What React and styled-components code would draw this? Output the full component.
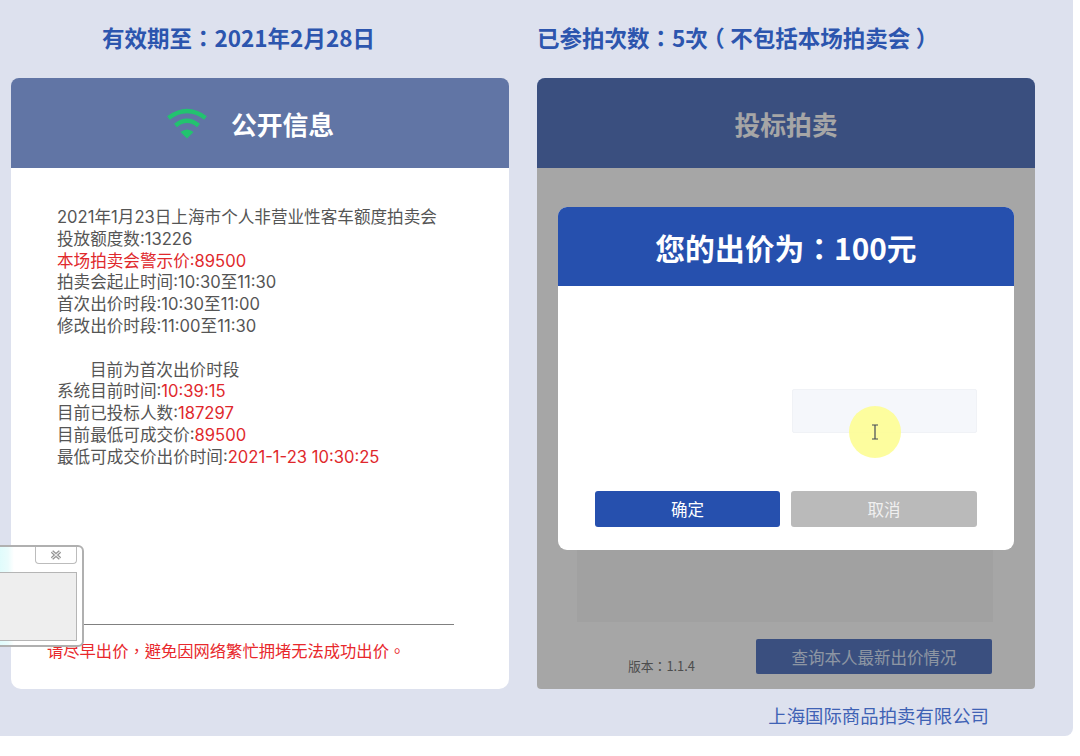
import styled, { createGlobalStyle } from "styled-components"

const GlobalStyle = createGlobalStyle`
    html, body {
        margin: 0;
        padding: 0;
        background: #ffffff;
    }
    * {
        box-sizing: border-box;
    }
`

const infoLines = [
    { text: "2021年1月23日上海市个人非营业性客车额度拍卖会" },
    { text: "投放额度数:13226" },
    { text: "本场拍卖会警示价:89500", alert: true },
    { text: "拍卖会起止时间:10:30至11:30" },
    { text: "首次出价时段:10:30至11:00" },
    { text: "修改出价时段:11:00至11:30" },
]

const statusLines = [
    { label: "系统目前时间:", value: "10:39:15" },
    { label: "目前已投标人数:", value: "187297" },
    { label: "目前最低可成交价:", value: "89500" },
    { label: "最低可成交价出价时间:", value: "2021-1-23 10:30:25" },
]

function WifiIcon() {
    return (
        <svg width="42" height="32" viewBox="0 0 42 32" fill="none">
            <path d="M2.5 11 Q21 -3 39.5 11" stroke="#22C36F" strokeWidth="4.5" />
            <path d="M9.5 18.5 Q21 9 32.5 18.5" stroke="#22C36F" strokeWidth="4.5" />
            <path d="M14.5 25 Q21 20 27.5 25 L21 31.5 Z" fill="#22C36F" />
        </svg>
    )
}

function TextCursor() {
    return (
        <svg width="10" height="16" viewBox="0 0 10 16" fill="none">
            <path d="M2 1 H8 M5 1 V15 M2 15 H8" stroke="#444a55" strokeWidth="1.2" />
        </svg>
    )
}

export default function App() {
    return (
        <Screen>
            <GlobalStyle />
            <Page>
                <Columns>
                    <Column>
                        <InfoTitle $indent="91px">有效期至：2021年2月28日</InfoTitle>
                        <Card>
                            <PublicHeader>
                                <WifiIcon />
                                <span>公开信息</span>
                            </PublicHeader>
                            <PublicBody>
                                <InfoBlock>
                                    {infoLines.map((line) => (
                                        <InfoLine key={line.text} $alert={line.alert}>{line.text}</InfoLine>
                                    ))}
                                    <StatusTitle>目前为首次出价时段</StatusTitle>
                                    {statusLines.map((line) => (
                                        <InfoLine key={line.label}>
                                            {line.label}<Red>{line.value}</Red>
                                        </InfoLine>
                                    ))}
                                </InfoBlock>
                                <Notice>请尽早出价，避免因网络繁忙拥堵无法成功出价。</Notice>
                            </PublicBody>
                        </Card>
                    </Column>

                    <Column>
                        <InfoTitle>
                            已参拍次数：5次<Paren>（</Paren>不包括本场拍卖会<Paren>）</Paren>
                        </InfoTitle>
                        <Card $bottomRadius="4px">
                            <BidHeader>投标拍卖</BidHeader>
                            <BidBody>
                                <BidPanel />
                                <BidFooter>
                                    <Version>版本：1.1.4</Version>
                                    <QueryButton>查询本人最新出价情况</QueryButton>
                                </BidFooter>
                            </BidBody>
                            <Overlay />
                            <Modal>
                                <ModalHeader>您的出价为：100元</ModalHeader>
                                <ModalBody>
                                    <PriceInput />
                                    <ModalButtons>
                                        <ModalButton $primary>确定</ModalButton>
                                        <ModalButton>取消</ModalButton>
                                    </ModalButtons>
                                </ModalBody>
                            </Modal>
                        </Card>
                        <Company>上海国际商品拍卖有限公司</Company>
                    </Column>
                </Columns>
            </Page>

            <Highlight>
                <TextCursor />
            </Highlight>

            <PopupWindow>
                <PopupClose>
                    <svg width="12" height="10" viewBox="0 0 12 10" fill="none">
                        <path d="M2 1.5 L10 8.5 M10 1.5 L2 8.5" stroke="#8b8b8b" strokeWidth="3.4" />
                        <path d="M2 1.5 L10 8.5 M10 1.5 L2 8.5" stroke="#e8e8e8" strokeWidth="1.1" />
                    </svg>
                </PopupClose>
                <PopupContent />
            </PopupWindow>
        </Screen>
    )
}

const Screen = styled.div`
    position: relative;
    width: 1080px;
    height: 756px;
    overflow: hidden;
    background: #ffffff;
    font-family: Inter, "Noto Sans CJK SC", sans-serif;
`
const Page = styled.div`
    width: 1073px;
    height: 736px;
    background: #dde1ee;
    border-bottom-right-radius: 8px;
    padding: 3px 0 0 11px;
`
const Columns = styled.div`
    display: grid;
    grid-template-columns: 498px 498px;
    column-gap: 28px;
`
const Column = styled.div`
    display: flex;
    flex-direction: column;
`
const InfoTitle = styled.div`
    height: 75px;
    padding: 18px 0 0 ${(props) => props.$indent || "0"};
    line-height: 32px;
    font-family: "Noto Sans CJK TC", sans-serif;
    font-size: 22.5px;
    font-weight: bold;
    color: #2c55ae;
    white-space: nowrap;
`
const Paren = styled.span`
    font-feature-settings: "halt";
    padding: 0 5.6px;
`
const Card = styled.div`
    position: relative;
    height: 611px;
    display: flex;
    flex-direction: column;
    border-radius: 8px 8px ${(props) => props.$bottomRadius || "0"} ${(props) => props.$bottomRadius || "0"};
    overflow: hidden;
`
const PublicHeader = styled.div`
    height: 90px;
    flex-shrink: 0;
    display: flex;
    align-items: center;
    justify-content: center;
    gap: 23px;
    padding-right: 20px;
    background: #6175a5;
    color: #ffffff;
    font-family: "Noto Sans CJK SC", sans-serif;
    font-size: 25.8px;
    font-weight: bold;
`
const PublicBody = styled.div`
    flex: 1;
    display: flex;
    flex-direction: column;
    justify-content: space-between;
    background: #ffffff;
    border-radius: 0 0 10px 10px;
`
const InfoBlock = styled.div`
    padding: 39px 0 0 46px;
    font-size: 16.6px;
    line-height: 21.8px;
    color: #555555;
`
const InfoLine = styled.div`
    color: ${(props) => (props.$alert ? "#e0282c" : "#555555")};
    white-space: nowrap;
`
const StatusTitle = styled.div`
    margin-top: 21.8px;
    padding-left: 33px;
`
const Red = styled.span`
    color: #e0282c;
`
const Notice = styled.div`
    margin: 0 55px 27px 36px;
    padding-top: 13px;
    border-top: 1px solid #808080;
    font-family: "Noto Sans CJK TC", sans-serif;
    font-size: 16.3px;
    line-height: 24px;
    color: #e8282c;
    white-space: nowrap;
`
const BidHeader = styled.div`
    height: 90px;
    flex-shrink: 0;
    display: flex;
    align-items: center;
    justify-content: center;
    background: #5a7ac4;
    color: #ffffff;
    font-family: "Noto Sans CJK SC", sans-serif;
    font-size: 25.8px;
    font-weight: bold;
`
const BidBody = styled.div`
    flex: 1;
    display: flex;
    flex-direction: column;
    background: #ffffff;
`
const BidPanel = styled.div`
    height: 394px;
    margin: 60px 42px 0 40px;
    background: #f7f7f8;
`
const BidFooter = styled.div`
    display: flex;
    align-items: flex-end;
    padding: 17px 43px 0 91px;
`
const Version = styled.div`
    flex: 1;
    font-family: "Noto Sans CJK TC", sans-serif;
    font-size: 12.8px;
    line-height: 16px;
    color: #777777;
`
const QueryButton = styled.div`
    width: 236px;
    height: 35px;
    display: flex;
    align-items: center;
    justify-content: center;
    border-radius: 2px;
    background: #5a7ac4;
    color: #dbe6fa;
    font-family: "Noto Sans CJK SC", sans-serif;
    font-size: 16.5px;
`
const Overlay = styled.div`
    position: absolute;
    inset: 0;
    background: rgba(0, 0, 0, 0.35);
`
const Modal = styled.div`
    position: absolute;
    left: 21px;
    top: 129px;
    width: 456px;
    height: 343px;
    display: flex;
    flex-direction: column;
    border-radius: 9px;
    overflow: hidden;
    background: #ffffff;
`
const ModalHeader = styled.div`
    height: 79px;
    display: flex;
    align-items: center;
    justify-content: center;
    background: #2650ae;
    color: #ffffff;
    font-family: "Noto Sans CJK TC", sans-serif;
    font-size: 29.8px;
    font-weight: bold;
`
const ModalBody = styled.div`
    flex: 1;
    display: flex;
    flex-direction: column;
    padding: 103px 37px 23px;
`
const PriceInput = styled.div`
    align-self: flex-end;
    width: 185px;
    height: 44px;
    background: #f5f7fb;
    border: 1px solid #f0f2f6;
    border-radius: 2px;
`
const ModalButtons = styled.div`
    margin-top: auto;
    display: grid;
    grid-template-columns: 185px 186px;
    column-gap: 11px;
`
const ModalButton = styled.div`
    height: 36px;
    display: flex;
    align-items: center;
    justify-content: center;
    border-radius: 3px;
    background: ${(props) => (props.$primary ? "#2650ae" : "#bababa")};
    color: ${(props) => (props.$primary ? "#ffffff" : "#f0f0f0")};
    font-family: "Noto Sans CJK SC", sans-serif;
    font-size: 16.5px;
`
const Company = styled.div`
    padding: 13px 46px 0 0;
    text-align: right;
    font-family: "Noto Sans CJK SC", sans-serif;
    font-size: 18.4px;
    line-height: 26px;
    color: #3f62b5;
    white-space: nowrap;
`
const Highlight = styled.div`
    position: absolute;
    left: 849px;
    top: 406px;
    width: 52px;
    height: 52px;
    display: flex;
    align-items: center;
    justify-content: center;
    border-radius: 50%;
    background: rgba(253, 253, 150, 0.92);
`
const PopupWindow = styled.div`
    position: absolute;
    left: -20px;
    top: 545px;
    width: 104px;
    height: 102px;
    padding: 0 5px 4px 0;
    display: flex;
    flex-direction: column;
    border: 2px solid #b0b0b0;
    border-radius: 6px;
    background: linear-gradient(90deg, #c9fbfb 0, #eafcfc 26px, #ffffff 32px);
`
const PopupClose = styled.div`
    align-self: flex-end;
    width: 42px;
    height: 17px;
    display: flex;
    align-items: center;
    justify-content: center;
    border: 1px solid #bcbcbc;
    border-top: none;
    border-radius: 0 0 4px 4px;
    background: #ffffff;
`
const PopupContent = styled.div`
    flex: 1;
    margin-top: 8px;
    background: #eeeeee;
    border: 1px solid #b5b5b5;
`
